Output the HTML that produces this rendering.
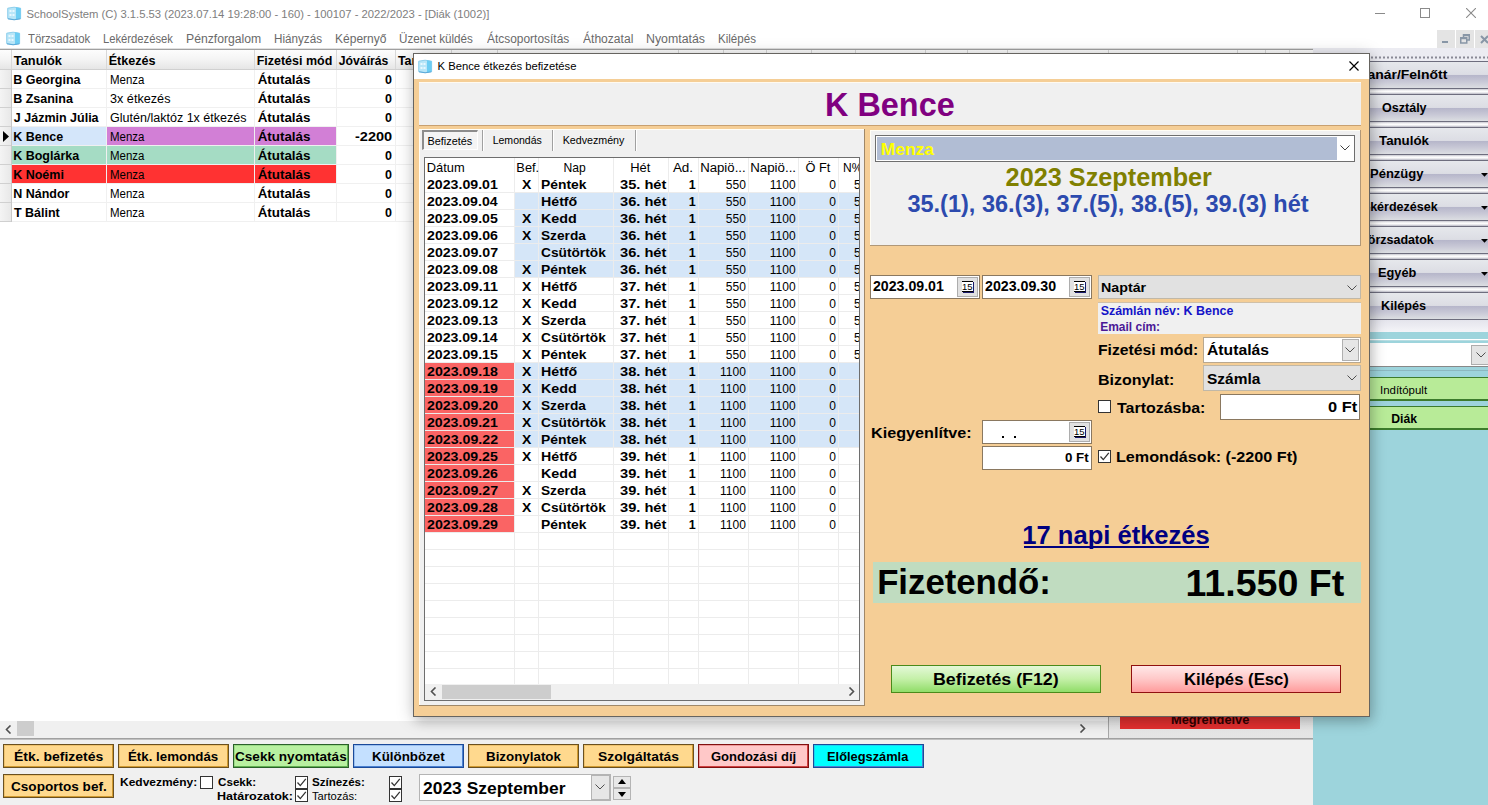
<!DOCTYPE html>
<html><head><meta charset="utf-8">
<style>
*{margin:0;padding:0;box-sizing:border-box}
html,body{width:1488px;height:805px;overflow:hidden;background:#f0f0f0;font-family:"Liberation Sans",sans-serif;color:#000;position:relative}
.a{position:absolute}
.t{position:absolute;white-space:nowrap;line-height:1}
svg{position:absolute}
</style></head><body>
<div class="a" style="left:0px;top:0px;width:1488px;height:49px;background:#fff"></div>
<svg style="left:7px;top:6px" width="15" height="15"><path d="M0.7 2.2 Q7 0.2 13.6 2.2 V12.6 Q7 14.6 0.7 12.6 Z" fill="#b8e6f8" stroke="#86cbea" stroke-width="0.9"/><path d="M9 1.2 Q11.5 1.5 13.6 2.2 V12.6 Q11.5 13.3 9 13.6 Z" fill="#6ccdf3"/><path d="M2.5 4h2v2h-2zM5.5 4h2v2h-2zM2.5 8h2v2h-2zM5.5 8h2v2h-2z" fill="#e8f8ff"/><path d="M1 12.8 Q7 14.8 13.4 12.8" fill="none" stroke="#5aa8d8" stroke-width="1"/></svg>
<div class="t" style="left:26.49px;top:9px;font-size:11.28px;color:#7e7e7e;">SchoolSystem (C) 3.1.5.53 (2023.07.14 19:28:00 - 160) - 100107 - 2022/2023 - [Diák (1002)]</div>
<div class="a" style="left:1375px;top:13px;width:10px;height:1px;background:#8a8a8a"></div>
<div class="a" style="left:1420px;top:8px;width:10px;height:10px;border:1px solid #8a8a8a"></div>
<svg style="left:1466px;top:8px" width="10" height="10"><path d="M0 0L10 10M10 0L0 10" stroke="#8a8a8a" stroke-width="1.1"/></svg>
<svg style="left:6px;top:31px" width="15" height="15"><path d="M0.7 2.2 Q7 0.2 13.6 2.2 V12.6 Q7 14.6 0.7 12.6 Z" fill="#b8e6f8" stroke="#86cbea" stroke-width="0.9"/><path d="M9 1.2 Q11.5 1.5 13.6 2.2 V12.6 Q11.5 13.3 9 13.6 Z" fill="#6ccdf3"/><path d="M2.5 4h2v2h-2zM5.5 4h2v2h-2zM2.5 8h2v2h-2zM5.5 8h2v2h-2z" fill="#e8f8ff"/><path d="M1 12.8 Q7 14.8 13.4 12.8" fill="none" stroke="#5aa8d8" stroke-width="1"/></svg>
<div class="t" style="left:27.77px;top:33px;font-size:12.00px;color:#6a6a6a;transform:scaleX(0.9420);transform-origin:0 0;">Törzsadatok</div>
<div class="t" style="left:103.10px;top:33px;font-size:12.00px;color:#6a6a6a;transform:scaleX(0.9357);transform-origin:0 0;">Lekérdezések</div>
<div class="t" style="left:186.02px;top:33px;font-size:12.00px;color:#6a6a6a;transform:scaleX(1.0166);transform-origin:0 0;">Pénzforgalom</div>
<div class="t" style="left:274.07px;top:33px;font-size:12.00px;color:#6a6a6a;transform:scaleX(0.9729);transform-origin:0 0;">Hiányzás</div>
<div class="t" style="left:335.04px;top:33px;font-size:12.00px;color:#6a6a6a;">Képernyő</div>
<div class="t" style="left:399.13px;top:33px;font-size:12.00px;color:#6a6a6a;transform:scaleX(0.9719);transform-origin:0 0;">Üzenet küldés</div>
<div class="t" style="left:487.00px;top:33px;font-size:12.00px;color:#6a6a6a;transform:scaleX(0.9944);transform-origin:0 0;">Átcsoportosítás</div>
<div class="t" style="left:583.00px;top:33px;font-size:12.00px;color:#6a6a6a;transform:scaleX(1.0061);transform-origin:0 0;">Áthozatal</div>
<div class="t" style="left:646.01px;top:33px;font-size:12.00px;color:#6a6a6a;transform:scaleX(1.0289);transform-origin:0 0;">Nyomtatás</div>
<div class="t" style="left:718.07px;top:33px;font-size:12.00px;color:#6a6a6a;transform:scaleX(0.9637);transform-origin:0 0;">Kilépés</div>
<div class="a" style="left:1437px;top:30px;width:18px;height:18px;background:#e4e4e4"></div>
<div class="a" style="left:1456px;top:30px;width:18px;height:18px;background:#e4e4e4"></div>
<div class="a" style="left:1475px;top:30px;width:13px;height:18px;background:#e4e4e4"></div>
<div class="a" style="left:1442px;top:41px;width:6px;height:2px;background:#8896a6"></div>
<svg style="left:1460px;top:34px" width="11" height="10"><path d="M3.5 3V0.75H9.25V6H6.5" fill="none" stroke="#8896a6" stroke-width="1.5"/><rect x="0.75" y="3.75" width="6" height="5.25" fill="none" stroke="#8896a6" stroke-width="1.5"/><rect x="0.75" y="3.75" width="6" height="1.5" fill="#8896a6"/><rect x="3.5" y="0.75" width="5.75" height="1.5" fill="#8896a6"/></svg>
<svg style="left:1480px;top:35px" width="9" height="9"><path d="M1 1L8 8M8 1L1 8" stroke="#8896a6" stroke-width="2"/></svg>
<div class="a" style="left:0px;top:48px;width:1313px;height:1px;background:#e0e0e0"></div>
<div class="a" style="left:0px;top:49px;width:1313px;height:1px;background:#a0a0a0"></div>
<div class="a" style="left:0px;top:50px;width:1313px;height:671px;background:#fff"></div>
<div class="a" style="left:0px;top:50px;width:1313px;height:19px;background:linear-gradient(#fdfdfd,#f4f4f4 50%,#e6e6e6)"></div>
<div class="a" style="left:0px;top:69px;width:1313px;height:1px;background:#d0d0d0"></div>
<div class="a" style="left:11px;top:50px;width:1px;height:19px;background:#d8d8d8"></div>
<div class="a" style="left:106px;top:50px;width:1px;height:19px;background:#d8d8d8"></div>
<div class="a" style="left:254px;top:50px;width:1px;height:19px;background:#d8d8d8"></div>
<div class="a" style="left:336px;top:50px;width:1px;height:19px;background:#d8d8d8"></div>
<div class="a" style="left:395px;top:50px;width:1px;height:19px;background:#d8d8d8"></div>
<div class="a" style="left:451px;top:50px;width:1px;height:19px;background:#d8d8d8"></div>
<div class="a" style="left:497px;top:50px;width:1px;height:19px;background:#d8d8d8"></div>
<div class="a" style="left:678px;top:50px;width:1px;height:19px;background:#d8d8d8"></div>
<div class="a" style="left:723px;top:50px;width:1px;height:19px;background:#d8d8d8"></div>
<div class="a" style="left:766px;top:50px;width:1px;height:19px;background:#d8d8d8"></div>
<div class="a" style="left:811px;top:50px;width:1px;height:19px;background:#d8d8d8"></div>
<div class="a" style="left:855px;top:50px;width:1px;height:19px;background:#d8d8d8"></div>
<div class="a" style="left:925px;top:50px;width:1px;height:19px;background:#d8d8d8"></div>
<div class="a" style="left:967px;top:50px;width:1px;height:19px;background:#d8d8d8"></div>
<div class="a" style="left:1007px;top:50px;width:1px;height:19px;background:#d8d8d8"></div>
<div class="a" style="left:1108px;top:50px;width:1px;height:19px;background:#d8d8d8"></div>
<div class="a" style="left:1237px;top:50px;width:1px;height:19px;background:#d8d8d8"></div>
<div class="a" style="left:1265px;top:50px;width:1px;height:19px;background:#d8d8d8"></div>
<div class="a" style="left:1289px;top:50px;width:1px;height:19px;background:#d8d8d8"></div>
<div class="a" style="left:0px;top:70px;width:11px;height:152px;background:linear-gradient(90deg,#f4f4f4,#e8e8e8)"></div>
<div class="a" style="left:11px;top:70px;width:1px;height:152px;background:#c8c8c8"></div>
<div class="a" style="left:0px;top:88px;width:11px;height:1px;background:#d0d0d0"></div>
<div class="a" style="left:12px;top:88px;width:1301px;height:1px;background:#f0f0f0"></div>
<div class="a" style="left:106px;top:70px;width:1px;height:18px;background:#f0f0f0"></div>
<div class="a" style="left:254px;top:70px;width:1px;height:18px;background:#f0f0f0"></div>
<div class="a" style="left:336px;top:70px;width:1px;height:18px;background:#f0f0f0"></div>
<div class="a" style="left:395px;top:70px;width:1px;height:18px;background:#f0f0f0"></div>
<div class="t" style="left:13.19px;top:74px;font-size:12.50px;font-weight:bold;color:#000;">B Georgina</div>
<div class="t" style="left:109.58px;top:74px;font-size:12.00px;color:#000;transform:scaleX(0.9561);transform-origin:0 0;">Menza</div>
<div class="t" style="left:257.66px;top:73px;font-size:13.40px;font-weight:bold;color:#000;">Átutalás</div>
<div class="t" style="left:385.06px;top:74px;font-size:12.50px;font-weight:bold;color:#000;">0</div>
<div class="a" style="left:0px;top:107px;width:11px;height:1px;background:#d0d0d0"></div>
<div class="a" style="left:12px;top:107px;width:1301px;height:1px;background:#f0f0f0"></div>
<div class="a" style="left:106px;top:89px;width:1px;height:18px;background:#f0f0f0"></div>
<div class="a" style="left:254px;top:89px;width:1px;height:18px;background:#f0f0f0"></div>
<div class="a" style="left:336px;top:89px;width:1px;height:18px;background:#f0f0f0"></div>
<div class="a" style="left:395px;top:89px;width:1px;height:18px;background:#f0f0f0"></div>
<div class="t" style="left:13.19px;top:93px;font-size:12.50px;font-weight:bold;color:#000;">B Zsanina</div>
<div class="t" style="left:109.99px;top:93px;font-size:12.00px;color:#000;transform:scaleX(1.0538);transform-origin:0 0;">3x étkezés</div>
<div class="t" style="left:257.66px;top:92px;font-size:13.40px;font-weight:bold;color:#000;">Átutalás</div>
<div class="t" style="left:385.06px;top:93px;font-size:12.50px;font-weight:bold;color:#000;">0</div>
<div class="a" style="left:0px;top:126px;width:11px;height:1px;background:#d0d0d0"></div>
<div class="a" style="left:12px;top:126px;width:1301px;height:1px;background:#f0f0f0"></div>
<div class="a" style="left:106px;top:108px;width:1px;height:18px;background:#f0f0f0"></div>
<div class="a" style="left:254px;top:108px;width:1px;height:18px;background:#f0f0f0"></div>
<div class="a" style="left:336px;top:108px;width:1px;height:18px;background:#f0f0f0"></div>
<div class="a" style="left:395px;top:108px;width:1px;height:18px;background:#f0f0f0"></div>
<div class="t" style="left:13.81px;top:112px;font-size:12.50px;font-weight:bold;color:#000;">J Jázmin Júlia</div>
<div class="t" style="left:109.87px;top:112px;font-size:12.00px;color:#000;transform:scaleX(1.0446);transform-origin:0 0;">Glutén/laktóz 1x étkezés</div>
<div class="t" style="left:257.66px;top:111px;font-size:13.40px;font-weight:bold;color:#000;">Átutalás</div>
<div class="t" style="left:385.06px;top:112px;font-size:12.50px;font-weight:bold;color:#000;">0</div>
<div class="a" style="left:12px;top:127px;width:94px;height:18px;background:#d4e6fa"></div>
<div class="a" style="left:107px;top:127px;width:147px;height:18px;background:#d27fd6"></div>
<div class="a" style="left:255px;top:127px;width:81px;height:18px;background:#d27fd6"></div>
<div class="a" style="left:0px;top:145px;width:11px;height:1px;background:#d0d0d0"></div>
<div class="a" style="left:12px;top:145px;width:1301px;height:1px;background:#f0f0f0"></div>
<div class="a" style="left:106px;top:127px;width:1px;height:18px;background:#f0f0f0"></div>
<div class="a" style="left:254px;top:127px;width:1px;height:18px;background:#f0f0f0"></div>
<div class="a" style="left:336px;top:127px;width:1px;height:18px;background:#f0f0f0"></div>
<div class="a" style="left:395px;top:127px;width:1px;height:18px;background:#f0f0f0"></div>
<div class="t" style="left:13.19px;top:131px;font-size:12.50px;font-weight:bold;color:#000;">K Bence</div>
<div class="t" style="left:109.58px;top:131px;font-size:12.00px;color:#000;transform:scaleX(0.9561);transform-origin:0 0;">Menza</div>
<div class="t" style="left:257.66px;top:130px;font-size:13.40px;font-weight:bold;color:#000;">Átutalás</div>
<div class="t" style="left:354.92px;top:131px;font-size:12.50px;font-weight:bold;color:#000;transform:scaleX(1.1636);transform-origin:0 0;">-2200</div>
<div class="a" style="left:12px;top:146px;width:94px;height:18px;background:#a5dcc4"></div>
<div class="a" style="left:107px;top:146px;width:147px;height:18px;background:#a5dcc4"></div>
<div class="a" style="left:255px;top:146px;width:81px;height:18px;background:#a5dcc4"></div>
<div class="a" style="left:0px;top:164px;width:11px;height:1px;background:#d0d0d0"></div>
<div class="a" style="left:12px;top:164px;width:1301px;height:1px;background:#f0f0f0"></div>
<div class="a" style="left:106px;top:146px;width:1px;height:18px;background:#f0f0f0"></div>
<div class="a" style="left:254px;top:146px;width:1px;height:18px;background:#f0f0f0"></div>
<div class="a" style="left:336px;top:146px;width:1px;height:18px;background:#f0f0f0"></div>
<div class="a" style="left:395px;top:146px;width:1px;height:18px;background:#f0f0f0"></div>
<div class="t" style="left:13.19px;top:150px;font-size:12.50px;font-weight:bold;color:#000;">K Boglárka</div>
<div class="t" style="left:109.58px;top:150px;font-size:12.00px;color:#000;transform:scaleX(0.9561);transform-origin:0 0;">Menza</div>
<div class="t" style="left:257.66px;top:149px;font-size:13.40px;font-weight:bold;color:#000;">Átutalás</div>
<div class="t" style="left:385.06px;top:150px;font-size:12.50px;font-weight:bold;color:#000;">0</div>
<div class="a" style="left:12px;top:165px;width:94px;height:18px;background:#ff3232"></div>
<div class="a" style="left:107px;top:165px;width:147px;height:18px;background:#ff3232"></div>
<div class="a" style="left:255px;top:165px;width:81px;height:18px;background:#ff3232"></div>
<div class="a" style="left:0px;top:183px;width:11px;height:1px;background:#d0d0d0"></div>
<div class="a" style="left:12px;top:183px;width:1301px;height:1px;background:#f0f0f0"></div>
<div class="a" style="left:106px;top:165px;width:1px;height:18px;background:#f0f0f0"></div>
<div class="a" style="left:254px;top:165px;width:1px;height:18px;background:#f0f0f0"></div>
<div class="a" style="left:336px;top:165px;width:1px;height:18px;background:#f0f0f0"></div>
<div class="a" style="left:395px;top:165px;width:1px;height:18px;background:#f0f0f0"></div>
<div class="t" style="left:13.19px;top:169px;font-size:12.50px;font-weight:bold;color:#000;">K Noémi</div>
<div class="t" style="left:109.58px;top:169px;font-size:12.00px;color:#000;transform:scaleX(0.9561);transform-origin:0 0;">Menza</div>
<div class="t" style="left:257.66px;top:168px;font-size:13.40px;font-weight:bold;color:#000;">Átutalás</div>
<div class="t" style="left:385.06px;top:169px;font-size:12.50px;font-weight:bold;color:#000;">0</div>
<div class="a" style="left:0px;top:202px;width:11px;height:1px;background:#d0d0d0"></div>
<div class="a" style="left:12px;top:202px;width:1301px;height:1px;background:#f0f0f0"></div>
<div class="a" style="left:106px;top:184px;width:1px;height:18px;background:#f0f0f0"></div>
<div class="a" style="left:254px;top:184px;width:1px;height:18px;background:#f0f0f0"></div>
<div class="a" style="left:336px;top:184px;width:1px;height:18px;background:#f0f0f0"></div>
<div class="a" style="left:395px;top:184px;width:1px;height:18px;background:#f0f0f0"></div>
<div class="t" style="left:13.19px;top:188px;font-size:12.50px;font-weight:bold;color:#000;">N Nándor</div>
<div class="t" style="left:109.58px;top:188px;font-size:12.00px;color:#000;transform:scaleX(0.9561);transform-origin:0 0;">Menza</div>
<div class="t" style="left:257.66px;top:187px;font-size:13.40px;font-weight:bold;color:#000;">Átutalás</div>
<div class="t" style="left:385.06px;top:188px;font-size:12.50px;font-weight:bold;color:#000;">0</div>
<div class="a" style="left:0px;top:221px;width:11px;height:1px;background:#d0d0d0"></div>
<div class="a" style="left:12px;top:221px;width:1301px;height:1px;background:#f0f0f0"></div>
<div class="a" style="left:106px;top:203px;width:1px;height:18px;background:#f0f0f0"></div>
<div class="a" style="left:254px;top:203px;width:1px;height:18px;background:#f0f0f0"></div>
<div class="a" style="left:336px;top:203px;width:1px;height:18px;background:#f0f0f0"></div>
<div class="a" style="left:395px;top:203px;width:1px;height:18px;background:#f0f0f0"></div>
<div class="t" style="left:13.88px;top:207px;font-size:12.50px;font-weight:bold;color:#000;">T Bálint</div>
<div class="t" style="left:109.58px;top:207px;font-size:12.00px;color:#000;transform:scaleX(0.9561);transform-origin:0 0;">Menza</div>
<div class="t" style="left:257.66px;top:206px;font-size:13.40px;font-weight:bold;color:#000;">Átutalás</div>
<div class="t" style="left:385.06px;top:207px;font-size:12.50px;font-weight:bold;color:#000;">0</div>
<svg style="left:2px;top:131px" width="8" height="11"><path d="M1 0L7 5.5L1 11Z" fill="#000"/></svg>
<div class="t" style="left:13.87px;top:55px;font-size:12.80px;font-weight:bold;color:#000;">Tanulók</div>
<div class="t" style="left:108.68px;top:55px;font-size:12.62px;font-weight:bold;color:#000;">Étkezés</div>
<div class="t" style="left:256.69px;top:55px;font-size:12.49px;font-weight:bold;color:#000;">Fizetési mód</div>
<div class="t" style="left:338.82px;top:55px;font-size:12.23px;font-weight:bold;color:#000;">Jóváírás</div>
<div class="t" style="left:397.88px;top:55px;font-size:12.50px;font-weight:bold;color:#000;">Tanuló</div>
<div class="a" style="left:0px;top:721px;width:1108px;height:17px;background:#f0f0f0"></div>
<div class="a" style="left:17px;top:721px;width:17px;height:15px;background:#cdcdcd"></div>
<svg style="left:5px;top:725px" width="7" height="9"><path d="M5.5 0.5L1.5 4.5L5.5 8.5" fill="none" stroke="#505050" stroke-width="1.6"/></svg>
<svg style="left:1079px;top:724px" width="7" height="9"><path d="M1.5 0.5L5.5 4.5L1.5 8.5" fill="none" stroke="#505050" stroke-width="1.6"/></svg>
<div class="a" style="left:1108px;top:700px;width:1px;height:38px;background:#a8a8a8"></div>
<div class="a" style="left:1109px;top:700px;width:204px;height:38px;background:linear-gradient(#f4f4f4,#e4e4e4)"></div>
<div class="a" style="left:1120px;top:700px;width:180px;height:29px;background:#e53030"></div>
<div class="t" style="left:1171.17px;top:714px;font-size:12.00px;font-weight:bold;color:#300000;transform:scaleX(1.0677);transform-origin:0 0;">Megrendelve</div>
<div class="a" style="left:0px;top:738px;width:1313px;height:1px;background:#a0a0a0"></div>
<div class="a" style="left:0px;top:739px;width:1313px;height:1px;background:#c0c0c0"></div>
<div class="a" style="left:0px;top:740px;width:1313px;height:65px;background:#f0f0f0"></div>
<div class="a" style="left:3px;top:744px;width:111px;height:24px;background:#ffd98e;border:1px solid #6a5020;box-shadow:inset -1px -1px 0 #d09a30,inset 1px 1px 0 #d09a3055"></div>
<div class="t" style="left:13.69px;top:750px;font-size:13.00px;font-weight:bold;color:#000;transform:scaleX(1.0746);transform-origin:0 0;">Étk. befizetés</div>
<div class="a" style="left:118px;top:744px;width:111px;height:24px;background:#ffd98e;border:1px solid #6a5020;box-shadow:inset -1px -1px 0 #d09a30,inset 1px 1px 0 #d09a3055"></div>
<div class="t" style="left:128.24px;top:750px;font-size:13.00px;font-weight:bold;color:#000;transform:scaleX(1.0233);transform-origin:0 0;">Étk. lemondás</div>
<div class="a" style="left:233px;top:744px;width:116px;height:24px;background:#b8f0a0;border:1px solid #2a602a;box-shadow:inset -1px -1px 0 #60b050,inset 1px 1px 0 #60b05055"></div>
<div class="t" style="left:235.16px;top:750px;font-size:13.00px;font-weight:bold;color:#000;transform:scaleX(1.0445);transform-origin:0 0;">Csekk nyomtatás</div>
<div class="a" style="left:353px;top:744px;width:111px;height:24px;background:#c4e0ff;border:1px solid #1a4a9a;box-shadow:inset -1px -1px 0 #4a80d0,inset 1px 1px 0 #4a80d055"></div>
<div class="t" style="left:371.78px;top:750px;font-size:13.00px;font-weight:bold;color:#000;transform:scaleX(1.0280);transform-origin:0 0;">Különbözet</div>
<div class="a" style="left:468px;top:744px;width:111px;height:24px;background:#ffd98e;border:1px solid #6a5020;box-shadow:inset -1px -1px 0 #d09a30,inset 1px 1px 0 #d09a3055"></div>
<div class="t" style="left:485.63px;top:750px;font-size:13.00px;font-weight:bold;color:#000;transform:scaleX(1.0266);transform-origin:0 0;">Bizonylatok</div>
<div class="a" style="left:583px;top:744px;width:111px;height:24px;background:#ffd98e;border:1px solid #6a5020;box-shadow:inset -1px -1px 0 #d09a30,inset 1px 1px 0 #d09a3055"></div>
<div class="t" style="left:598.08px;top:750px;font-size:13.00px;font-weight:bold;color:#000;transform:scaleX(1.0674);transform-origin:0 0;">Szolgáltatás</div>
<div class="a" style="left:698px;top:744px;width:111px;height:24px;background:#ffc8c8;border:1px solid #801010;box-shadow:inset -1px -1px 0 #d04040,inset 1px 1px 0 #d0404055"></div>
<div class="t" style="left:710.98px;top:750px;font-size:13.00px;font-weight:bold;color:#000;">Gondozási díj</div>
<div class="a" style="left:813px;top:744px;width:111px;height:24px;background:#00ffff;border:1px solid #1a4a9a;box-shadow:inset -1px -1px 0 #4a80d0,inset 1px 1px 0 #4a80d055"></div>
<div class="t" style="left:827.37px;top:750px;font-size:13.00px;font-weight:bold;color:#000;transform:scaleX(0.9873);transform-origin:0 0;">Előlegszámla</div>
<div class="a" style="left:3px;top:774px;width:111px;height:24px;background:#ffd98e;border:1px solid #6a5020;box-shadow:inset -1px -1px 0 #d09a30,inset 1px 1px 0 #d09a3055"></div>
<div class="t" style="left:10.81px;top:780px;font-size:13.00px;font-weight:bold;color:#000;transform:scaleX(1.0437);transform-origin:0 0;">Csoportos bef.</div>
<div class="t" style="left:119.62px;top:776px;font-size:11.70px;font-weight:bold;color:#000;transform:scaleX(1.0254);transform-origin:0 0;">Kedvezmény:</div>
<div class="a" style="left:200px;top:776px;width:13px;height:13px;background:#fff;border:1px solid #333"></div>
<div class="t" style="left:217.73px;top:776px;font-size:11.70px;font-weight:bold;color:#000;transform:scaleX(0.9962);transform-origin:0 0;">Csekk:</div>
<div class="t" style="left:217.38px;top:790px;font-size:11.70px;font-weight:bold;color:#000;transform:scaleX(1.0729);transform-origin:0 0;">Határozatok:</div>
<div class="t" style="left:312.35px;top:776px;font-size:11.70px;font-weight:bold;color:#000;transform:scaleX(0.9936);transform-origin:0 0;">Színezés:</div>
<div class="t" style="left:312.48px;top:790px;font-size:11.70px;color:#000;transform:scaleX(0.9533);transform-origin:0 0;">Tartozás:</div>
<div class="a" style="left:295px;top:776px;width:13px;height:13px;background:#fff;border:1px solid #333"></div>
<svg style="left:296px;top:777px" width="11" height="11"><path d="M1.5 5.5L4.3 8.6L9.8 1.8" fill="none" stroke="#333" stroke-width="1.3"/></svg>
<div class="a" style="left:295px;top:789px;width:13px;height:13px;background:#fff;border:1px solid #333"></div>
<svg style="left:296px;top:790px" width="11" height="11"><path d="M1.5 5.5L4.3 8.6L9.8 1.8" fill="none" stroke="#333" stroke-width="1.3"/></svg>
<div class="a" style="left:389px;top:776px;width:13px;height:13px;background:#fff;border:1px solid #333"></div>
<svg style="left:390px;top:777px" width="11" height="11"><path d="M1.5 5.5L4.3 8.6L9.8 1.8" fill="none" stroke="#333" stroke-width="1.3"/></svg>
<div class="a" style="left:389px;top:789px;width:13px;height:13px;background:#fff;border:1px solid #333"></div>
<svg style="left:390px;top:790px" width="11" height="11"><path d="M1.5 5.5L4.3 8.6L9.8 1.8" fill="none" stroke="#333" stroke-width="1.3"/></svg>
<div class="a" style="left:419px;top:774px;width:192px;height:27px;background:#fff;border:1px solid #b4b4b4"></div>
<div class="a" style="left:591px;top:775px;width:19px;height:25px;background:#e6e6e6;border:1px solid #b4b4b4"></div>
<svg style="left:595px;top:784px" width="10" height="6"><path d="M0.5 0.5L5 5L9.5 0.5" fill="none" stroke="#505050" stroke-width="1"/></svg>
<div class="t" style="left:423.39px;top:780px;font-size:17.00px;font-weight:bold;color:#000;transform:scaleX(1.0258);transform-origin:0 0;">2023 Szeptember</div>
<div class="a" style="left:613px;top:776px;width:18px;height:12px;background:#e8e8e8;border:1px solid #b4b4b4"></div>
<div class="a" style="left:613px;top:788px;width:18px;height:12px;background:#e8e8e8;border:1px solid #b4b4b4"></div>
<svg style="left:618px;top:779px" width="8" height="5"><path d="M0 5L4 0L8 5Z" fill="#000"/></svg>
<svg style="left:618px;top:792px" width="8" height="5"><path d="M0 0L4 5L8 0Z" fill="#000"/></svg>
<div class="a" style="left:1313px;top:48px;width:175px;height:284px;background:linear-gradient(#ececf2,#e6e6ee)"></div>
<svg style="left:1313px;top:56px" width="175" height="3"><line x1="2" y1="1.5" x2="175" y2="1.5" stroke="#8a8a96" stroke-width="2" stroke-dasharray="2 2"/></svg>
<div class="a" style="left:1313px;top:61px;width:175px;height:1px;background:#6e6e7e"></div>
<div class="a" style="left:1313px;top:62px;width:175px;height:26px;background:linear-gradient(#e6e8ec 0%,#dcdde4 48%,#b6b6ca 51%,#c8c8d6 75%,#dcdee2 100%)"></div>
<div class="a" style="left:1313px;top:88px;width:175px;height:1px;background:#6e6e7e"></div>
<div class="a" style="left:1313px;top:89px;width:175px;height:5px;background:linear-gradient(#c8c8d0,#fdfdfd 40%,#fafafa 60%,#b8b8c4)"></div>
<div class="t" style="left:1360.36px;top:69px;font-size:12.50px;font-weight:bold;color:#000;transform:scaleX(1.1163);transform-origin:0 0;">Tanár/Felnőtt</div>
<div class="a" style="left:1313px;top:94px;width:175px;height:1px;background:#6e6e7e"></div>
<div class="a" style="left:1313px;top:95px;width:175px;height:26px;background:linear-gradient(#e6e8ec 0%,#dcdde4 48%,#b6b6ca 51%,#c8c8d6 75%,#dcdee2 100%)"></div>
<div class="a" style="left:1313px;top:121px;width:175px;height:1px;background:#6e6e7e"></div>
<div class="a" style="left:1313px;top:122px;width:175px;height:5px;background:linear-gradient(#c8c8d0,#fdfdfd 40%,#fafafa 60%,#b8b8c4)"></div>
<div class="t" style="left:1381.50px;top:102px;font-size:12.50px;font-weight:bold;color:#000;transform:scaleX(1.0028);transform-origin:0 0;">Osztály</div>
<div class="a" style="left:1313px;top:127px;width:175px;height:1px;background:#6e6e7e"></div>
<div class="a" style="left:1313px;top:128px;width:175px;height:26px;background:linear-gradient(#e6e8ec 0%,#dcdde4 48%,#b6b6ca 51%,#c8c8d6 75%,#dcdee2 100%)"></div>
<div class="a" style="left:1313px;top:154px;width:175px;height:1px;background:#6e6e7e"></div>
<div class="a" style="left:1313px;top:155px;width:175px;height:5px;background:linear-gradient(#c8c8d0,#fdfdfd 40%,#fafafa 60%,#b8b8c4)"></div>
<div class="t" style="left:1378.97px;top:135px;font-size:12.50px;font-weight:bold;color:#000;transform:scaleX(1.0624);transform-origin:0 0;">Tanulók</div>
<div class="a" style="left:1313px;top:160px;width:175px;height:1px;background:#6e6e7e"></div>
<div class="a" style="left:1313px;top:161px;width:175px;height:26px;background:linear-gradient(#e6e8ec 0%,#dcdde4 48%,#b6b6ca 51%,#c8c8d6 75%,#dcdee2 100%)"></div>
<div class="a" style="left:1313px;top:187px;width:175px;height:1px;background:#6e6e7e"></div>
<div class="a" style="left:1313px;top:188px;width:175px;height:5px;background:linear-gradient(#c8c8d0,#fdfdfd 40%,#fafafa 60%,#b8b8c4)"></div>
<div class="t" style="left:1369.91px;top:168px;font-size:12.50px;font-weight:bold;color:#000;transform:scaleX(1.0396);transform-origin:0 0;">Pénzügy</div>
<svg style="left:1481px;top:173px" width="7" height="4"><path d="M0 0L7 0L3.5 3.8Z" fill="#000"/></svg>
<div class="a" style="left:1313px;top:193px;width:175px;height:1px;background:#6e6e7e"></div>
<div class="a" style="left:1313px;top:194px;width:175px;height:26px;background:linear-gradient(#e6e8ec 0%,#dcdde4 48%,#b6b6ca 51%,#c8c8d6 75%,#dcdee2 100%)"></div>
<div class="a" style="left:1313px;top:220px;width:175px;height:1px;background:#6e6e7e"></div>
<div class="a" style="left:1313px;top:221px;width:175px;height:5px;background:linear-gradient(#c8c8d0,#fdfdfd 40%,#fafafa 60%,#b8b8c4)"></div>
<div class="t" style="left:1355.59px;top:201px;font-size:12.50px;font-weight:bold;color:#000;">Lekérdezések</div>
<svg style="left:1481px;top:206px" width="7" height="4"><path d="M0 0L7 0L3.5 3.8Z" fill="#000"/></svg>
<div class="a" style="left:1313px;top:226px;width:175px;height:1px;background:#6e6e7e"></div>
<div class="a" style="left:1313px;top:227px;width:175px;height:26px;background:linear-gradient(#e6e8ec 0%,#dcdde4 48%,#b6b6ca 51%,#c8c8d6 75%,#dcdee2 100%)"></div>
<div class="a" style="left:1313px;top:253px;width:175px;height:1px;background:#6e6e7e"></div>
<div class="a" style="left:1313px;top:254px;width:175px;height:5px;background:linear-gradient(#c8c8d0,#fdfdfd 40%,#fafafa 60%,#b8b8c4)"></div>
<div class="t" style="left:1360.12px;top:234px;font-size:12.50px;font-weight:bold;color:#000;">Törzsadatok</div>
<svg style="left:1481px;top:239px" width="7" height="4"><path d="M0 0L7 0L3.5 3.8Z" fill="#000"/></svg>
<div class="a" style="left:1313px;top:259px;width:175px;height:1px;background:#6e6e7e"></div>
<div class="a" style="left:1313px;top:260px;width:175px;height:26px;background:linear-gradient(#e6e8ec 0%,#dcdde4 48%,#b6b6ca 51%,#c8c8d6 75%,#dcdee2 100%)"></div>
<div class="a" style="left:1313px;top:286px;width:175px;height:1px;background:#6e6e7e"></div>
<div class="a" style="left:1313px;top:287px;width:175px;height:5px;background:linear-gradient(#c8c8d0,#fdfdfd 40%,#fafafa 60%,#b8b8c4)"></div>
<div class="t" style="left:1377.67px;top:267px;font-size:12.50px;font-weight:bold;color:#000;transform:scaleX(1.0225);transform-origin:0 0;">Egyéb</div>
<svg style="left:1481px;top:272px" width="7" height="4"><path d="M0 0L7 0L3.5 3.8Z" fill="#000"/></svg>
<div class="a" style="left:1313px;top:292px;width:175px;height:1px;background:#6e6e7e"></div>
<div class="a" style="left:1313px;top:293px;width:175px;height:26px;background:linear-gradient(#e6e8ec 0%,#dcdde4 48%,#b6b6ca 51%,#c8c8d6 75%,#dcdee2 100%)"></div>
<div class="a" style="left:1313px;top:319px;width:175px;height:1px;background:#6e6e7e"></div>
<div class="a" style="left:1313px;top:320px;width:175px;height:5px;background:linear-gradient(#c8c8d0,#fdfdfd 40%,#fafafa 60%,#b8b8c4)"></div>
<div class="t" style="left:1381.27px;top:300px;font-size:12.50px;font-weight:bold;color:#000;transform:scaleX(1.0157);transform-origin:0 0;">Kilépés</div>
<div class="a" style="left:1313px;top:320px;width:175px;height:12px;background:linear-gradient(#e4e4ec,#f4f4f8)"></div>
<div class="a" style="left:1313px;top:332px;width:175px;height:473px;background:#9dd4dc"></div>
<div class="a" style="left:1313px;top:339px;width:175px;height:1px;background:#fff"></div>
<div class="a" style="left:1313px;top:340px;width:175px;height:1px;background:#b8dde2"></div>
<div class="a" style="left:1313px;top:343px;width:175px;height:24px;background:linear-gradient(90deg,#e8e8e8,#fff 20%);border-bottom:1px solid #888"></div>
<div class="a" style="left:1471px;top:345px;width:20px;height:20px;background:#e4e4e4;border:1px solid #adadad"></div>
<svg style="left:1476px;top:352px" width="10" height="6"><path d="M0.5 0.5L5 5L9.5 0.5" fill="none" stroke="#505050" stroke-width="1"/></svg>
<div class="a" style="left:1313px;top:370px;width:175px;height:1px;background:#8cb8c0"></div>
<div class="a" style="left:1313px;top:377px;width:175px;height:24px;background:linear-gradient(90deg,#a0d890,#b8eb98 8%);border-top:1px solid #3c7c2c;border-bottom:2px solid #3c7c2c"></div>
<div class="t" style="left:1379.97px;top:385px;font-size:11.46px;color:#000;">Indítópult</div>
<div class="a" style="left:1313px;top:406px;width:175px;height:24px;background:linear-gradient(90deg,#a0d890,#b8eb98 8%);border-top:1px solid #3c7c2c;border-bottom:2px solid #3c7c2c"></div>
<div class="t" style="left:1391.21px;top:413px;font-size:12.22px;font-weight:bold;color:#000;">Diák</div>
<div class="a" style="left:413px;top:53px;width:957px;height:664px;box-shadow:0 2px 16px rgba(0,0,0,0.22),3px 5px 10px rgba(0,0,0,0.12)"></div>
<div class="a" style="left:413px;top:53px;width:957px;height:664px;background:#f5ce96;border:1px solid #666460"></div>
<div class="a" style="left:414px;top:54px;width:955px;height:25px;background:#fff"></div>
<svg style="left:418px;top:59px" width="15" height="15"><path d="M0.7 2.2 Q7 0.2 13.6 2.2 V12.6 Q7 14.6 0.7 12.6 Z" fill="#b8e6f8" stroke="#86cbea" stroke-width="0.9"/><path d="M9 1.2 Q11.5 1.5 13.6 2.2 V12.6 Q11.5 13.3 9 13.6 Z" fill="#6ccdf3"/><path d="M2.5 4h2v2h-2zM5.5 4h2v2h-2zM2.5 8h2v2h-2zM5.5 8h2v2h-2z" fill="#e8f8ff"/><path d="M1 12.8 Q7 14.8 13.4 12.8" fill="none" stroke="#5aa8d8" stroke-width="1"/></svg>
<div class="t" style="left:437.60px;top:61px;font-size:11.25px;color:#000;">K Bence étkezés befizetése</div>
<svg style="left:1349px;top:61px" width="10" height="10"><path d="M0.5 0.5L9.5 9.5M9.5 0.5L0.5 9.5" stroke="#000" stroke-width="1.2"/></svg>
<div class="a" style="left:419px;top:82px;width:942px;height:44px;background:#f0f0f0;border-bottom:1px solid #c8a070"></div>
<div class="a" style="left:419px;top:82px;width:942px;height:1px;background:#fffaf0"></div>
<div class="t" style="left:825.10px;top:89px;font-size:32.38px;font-weight:bold;color:#800080;">K Bence</div>
<div class="a" style="left:419px;top:129px;width:446px;height:577px;background:#f0f0f0;border-right:1px solid #a08868;border-bottom:1px solid #a08868"></div>
<div class="a" style="left:419px;top:129px;width:445px;height:1px;background:#fffdf5"></div>
<div class="a" style="left:419px;top:129px;width:1px;height:576px;background:#fffdf5"></div>
<div class="a" style="left:422px;top:130px;width:56px;height:20px;background:#f4f4f4;border-top:2px solid #8c8c8c;border-left:2px solid #8c8c8c;border-bottom:1px solid #fff;border-right:1px solid #fff"></div>
<div class="a" style="left:482px;top:130px;width:1px;height:21px;background:#a0a0a0"></div>
<div class="a" style="left:483px;top:130px;width:1px;height:21px;background:#fff"></div>
<div class="a" style="left:552px;top:130px;width:1px;height:21px;background:#a0a0a0"></div>
<div class="a" style="left:553px;top:130px;width:1px;height:21px;background:#fff"></div>
<div class="a" style="left:635px;top:130px;width:1px;height:21px;background:#a0a0a0"></div>
<div class="a" style="left:636px;top:130px;width:1px;height:21px;background:#fff"></div>
<div class="t" style="left:427.53px;top:136px;font-size:10.88px;color:#000;">Befizetés</div>
<div class="t" style="left:492.66px;top:135px;font-size:10.54px;color:#000;">Lemondás</div>
<div class="t" style="left:562.64px;top:135px;font-size:10.70px;color:#000;">Kedvezmény</div>
<div class="a" style="left:424px;top:157px;width:436px;height:544px;background:#fff;border:1px solid #6e6e6e"></div>
<div class="a" style="left:515px;top:193px;width:344px;height:16px;background:#d5e6f8"></div>
<div class="a" style="left:515px;top:210px;width:344px;height:16px;background:#d5e6f8"></div>
<div class="a" style="left:515px;top:227px;width:344px;height:16px;background:#d5e6f8"></div>
<div class="a" style="left:515px;top:244px;width:344px;height:16px;background:#d5e6f8"></div>
<div class="a" style="left:515px;top:261px;width:344px;height:16px;background:#d5e6f8"></div>
<div class="a" style="left:515px;top:363px;width:344px;height:16px;background:#d5e6f8"></div>
<div class="a" style="left:425px;top:363px;width:89px;height:16px;background:#fa6464"></div>
<div class="a" style="left:515px;top:380px;width:344px;height:16px;background:#d5e6f8"></div>
<div class="a" style="left:425px;top:380px;width:89px;height:16px;background:#fa6464"></div>
<div class="a" style="left:515px;top:397px;width:344px;height:16px;background:#d5e6f8"></div>
<div class="a" style="left:425px;top:397px;width:89px;height:16px;background:#fa6464"></div>
<div class="a" style="left:515px;top:414px;width:344px;height:16px;background:#d5e6f8"></div>
<div class="a" style="left:425px;top:414px;width:89px;height:16px;background:#fa6464"></div>
<div class="a" style="left:515px;top:431px;width:344px;height:16px;background:#d5e6f8"></div>
<div class="a" style="left:425px;top:431px;width:89px;height:16px;background:#fa6464"></div>
<div class="a" style="left:425px;top:448px;width:89px;height:16px;background:#fa6464"></div>
<div class="a" style="left:425px;top:465px;width:89px;height:16px;background:#fa6464"></div>
<div class="a" style="left:425px;top:482px;width:89px;height:16px;background:#fa6464"></div>
<div class="a" style="left:425px;top:499px;width:89px;height:16px;background:#fa6464"></div>
<div class="a" style="left:425px;top:516px;width:89px;height:16px;background:#fa6464"></div>
<div class="a" style="left:425px;top:192px;width:434px;height:1px;background:#ececec"></div>
<div class="a" style="left:425px;top:209px;width:434px;height:1px;background:#ececec"></div>
<div class="a" style="left:425px;top:226px;width:434px;height:1px;background:#ececec"></div>
<div class="a" style="left:425px;top:243px;width:434px;height:1px;background:#ececec"></div>
<div class="a" style="left:425px;top:260px;width:434px;height:1px;background:#ececec"></div>
<div class="a" style="left:425px;top:277px;width:434px;height:1px;background:#ececec"></div>
<div class="a" style="left:425px;top:294px;width:434px;height:1px;background:#ececec"></div>
<div class="a" style="left:425px;top:311px;width:434px;height:1px;background:#ececec"></div>
<div class="a" style="left:425px;top:328px;width:434px;height:1px;background:#ececec"></div>
<div class="a" style="left:425px;top:345px;width:434px;height:1px;background:#ececec"></div>
<div class="a" style="left:425px;top:362px;width:434px;height:1px;background:#ececec"></div>
<div class="a" style="left:425px;top:379px;width:434px;height:1px;background:#ececec"></div>
<div class="a" style="left:425px;top:396px;width:434px;height:1px;background:#ececec"></div>
<div class="a" style="left:425px;top:413px;width:434px;height:1px;background:#ececec"></div>
<div class="a" style="left:425px;top:430px;width:434px;height:1px;background:#ececec"></div>
<div class="a" style="left:425px;top:447px;width:434px;height:1px;background:#ececec"></div>
<div class="a" style="left:425px;top:464px;width:434px;height:1px;background:#ececec"></div>
<div class="a" style="left:425px;top:481px;width:434px;height:1px;background:#ececec"></div>
<div class="a" style="left:425px;top:498px;width:434px;height:1px;background:#ececec"></div>
<div class="a" style="left:425px;top:515px;width:434px;height:1px;background:#ececec"></div>
<div class="a" style="left:425px;top:532px;width:434px;height:1px;background:#ececec"></div>
<div class="a" style="left:425px;top:549px;width:434px;height:1px;background:#ececec"></div>
<div class="a" style="left:425px;top:566px;width:434px;height:1px;background:#ececec"></div>
<div class="a" style="left:425px;top:583px;width:434px;height:1px;background:#ececec"></div>
<div class="a" style="left:425px;top:600px;width:434px;height:1px;background:#ececec"></div>
<div class="a" style="left:425px;top:617px;width:434px;height:1px;background:#ececec"></div>
<div class="a" style="left:425px;top:634px;width:434px;height:1px;background:#ececec"></div>
<div class="a" style="left:425px;top:651px;width:434px;height:1px;background:#ececec"></div>
<div class="a" style="left:425px;top:668px;width:434px;height:1px;background:#ececec"></div>
<div class="a" style="left:514px;top:158px;width:1px;height:526px;background:#ececec"></div>
<div class="a" style="left:538px;top:158px;width:1px;height:526px;background:#ececec"></div>
<div class="a" style="left:613px;top:158px;width:1px;height:526px;background:#ececec"></div>
<div class="a" style="left:668px;top:158px;width:1px;height:526px;background:#ececec"></div>
<div class="a" style="left:698px;top:158px;width:1px;height:526px;background:#ececec"></div>
<div class="a" style="left:748px;top:158px;width:1px;height:526px;background:#ececec"></div>
<div class="a" style="left:798px;top:158px;width:1px;height:526px;background:#ececec"></div>
<div class="a" style="left:838px;top:158px;width:1px;height:526px;background:#ececec"></div>
<div class="t" style="left:426.77px;top:162px;font-size:12.86px;color:#000;">Dátum</div>
<div class="t" style="left:516.37px;top:162px;font-size:12.83px;color:#000;">Bef.</div>
<div class="t" style="left:563.53px;top:162px;font-size:12.13px;color:#000;">Nap</div>
<div class="t" style="left:630.27px;top:162px;font-size:12.93px;color:#000;">Hét</div>
<div class="t" style="left:672.90px;top:161px;font-size:13.48px;color:#000;">Ad.</div>
<div class="t" style="left:700.14px;top:161px;font-size:13.22px;color:#000;">Napiö...</div>
<div class="t" style="left:750.13px;top:161px;font-size:13.34px;color:#000;">Napiö...</div>
<div class="t" style="left:805.42px;top:162px;font-size:12.80px;color:#000;">Ö Ft</div>
<div class="t" style="left:843.04px;top:162px;font-size:12.00px;color:#000;clip-path:inset(0 0 0 0);">N%</div>
<div class="t" style="left:427.30px;top:179px;font-size:12.50px;font-weight:bold;color:#000;transform:scaleX(1.1325);transform-origin:0 0;">2023.09.01</div>
<div class="t" style="left:521.86px;top:179px;font-size:12.50px;font-weight:bold;color:#000;transform:scaleX(1.1163);transform-origin:0 0;">X</div>
<div class="t" style="left:540.70px;top:179px;font-size:12.50px;font-weight:bold;color:#000;transform:scaleX(1.1097);transform-origin:0 0;">Péntek</div>
<div class="t" style="left:620.13px;top:179px;font-size:12.50px;font-weight:bold;color:#000;transform:scaleX(1.1706);transform-origin:0 0;">35. hét</div>
<div class="t" style="left:688.67px;top:179px;font-size:12.50px;font-weight:bold;color:#000;">1</div>
<div class="t" style="left:725.84px;top:179px;font-size:12.00px;color:#000;">550</div>
<div class="t" style="left:769.82px;top:179px;font-size:12.00px;color:#000;">1100</div>
<div class="t" style="left:829.16px;top:179px;font-size:12.00px;color:#000;">0</div>
<div class="t" style="left:854.12px;top:179px;font-size:12.00px;color:#000;">5</div>
<div class="t" style="left:427.31px;top:196px;font-size:12.50px;font-weight:bold;color:#000;transform:scaleX(1.1279);transform-origin:0 0;">2023.09.04</div>
<div class="t" style="left:540.68px;top:196px;font-size:12.50px;font-weight:bold;color:#000;transform:scaleX(1.1346);transform-origin:0 0;">Hétfő</div>
<div class="t" style="left:620.13px;top:196px;font-size:12.50px;font-weight:bold;color:#000;transform:scaleX(1.1706);transform-origin:0 0;">36. hét</div>
<div class="t" style="left:688.67px;top:196px;font-size:12.50px;font-weight:bold;color:#000;">1</div>
<div class="t" style="left:725.84px;top:196px;font-size:12.00px;color:#000;">550</div>
<div class="t" style="left:769.82px;top:196px;font-size:12.00px;color:#000;">1100</div>
<div class="t" style="left:829.16px;top:196px;font-size:12.00px;color:#000;">0</div>
<div class="t" style="left:854.12px;top:196px;font-size:12.00px;color:#000;">5</div>
<div class="t" style="left:427.30px;top:213px;font-size:12.50px;font-weight:bold;color:#000;transform:scaleX(1.1325);transform-origin:0 0;">2023.09.05</div>
<div class="t" style="left:521.86px;top:213px;font-size:12.50px;font-weight:bold;color:#000;transform:scaleX(1.1163);transform-origin:0 0;">X</div>
<div class="t" style="left:540.67px;top:213px;font-size:12.50px;font-weight:bold;color:#000;transform:scaleX(1.1476);transform-origin:0 0;">Kedd</div>
<div class="t" style="left:620.13px;top:213px;font-size:12.50px;font-weight:bold;color:#000;transform:scaleX(1.1706);transform-origin:0 0;">36. hét</div>
<div class="t" style="left:688.67px;top:213px;font-size:12.50px;font-weight:bold;color:#000;">1</div>
<div class="t" style="left:725.84px;top:213px;font-size:12.00px;color:#000;">550</div>
<div class="t" style="left:769.82px;top:213px;font-size:12.00px;color:#000;">1100</div>
<div class="t" style="left:829.16px;top:213px;font-size:12.00px;color:#000;">0</div>
<div class="t" style="left:854.12px;top:213px;font-size:12.00px;color:#000;">5</div>
<div class="t" style="left:427.30px;top:230px;font-size:12.50px;font-weight:bold;color:#000;transform:scaleX(1.1348);transform-origin:0 0;">2023.09.06</div>
<div class="t" style="left:521.86px;top:230px;font-size:12.50px;font-weight:bold;color:#000;transform:scaleX(1.1163);transform-origin:0 0;">X</div>
<div class="t" style="left:541.19px;top:230px;font-size:12.50px;font-weight:bold;color:#000;transform:scaleX(1.0944);transform-origin:0 0;">Szerda</div>
<div class="t" style="left:620.13px;top:230px;font-size:12.50px;font-weight:bold;color:#000;transform:scaleX(1.1706);transform-origin:0 0;">36. hét</div>
<div class="t" style="left:688.67px;top:230px;font-size:12.50px;font-weight:bold;color:#000;">1</div>
<div class="t" style="left:725.84px;top:230px;font-size:12.00px;color:#000;">550</div>
<div class="t" style="left:769.82px;top:230px;font-size:12.00px;color:#000;">1100</div>
<div class="t" style="left:829.16px;top:230px;font-size:12.00px;color:#000;">0</div>
<div class="t" style="left:854.12px;top:230px;font-size:12.00px;color:#000;">5</div>
<div class="t" style="left:427.30px;top:247px;font-size:12.50px;font-weight:bold;color:#000;transform:scaleX(1.1359);transform-origin:0 0;">2023.09.07</div>
<div class="t" style="left:541.05px;top:247px;font-size:12.50px;font-weight:bold;color:#000;transform:scaleX(1.0977);transform-origin:0 0;">Csütörtök</div>
<div class="t" style="left:620.13px;top:247px;font-size:12.50px;font-weight:bold;color:#000;transform:scaleX(1.1706);transform-origin:0 0;">36. hét</div>
<div class="t" style="left:688.67px;top:247px;font-size:12.50px;font-weight:bold;color:#000;">1</div>
<div class="t" style="left:725.84px;top:247px;font-size:12.00px;color:#000;">550</div>
<div class="t" style="left:769.82px;top:247px;font-size:12.00px;color:#000;">1100</div>
<div class="t" style="left:829.16px;top:247px;font-size:12.00px;color:#000;">0</div>
<div class="t" style="left:854.12px;top:247px;font-size:12.00px;color:#000;">5</div>
<div class="t" style="left:427.30px;top:264px;font-size:12.50px;font-weight:bold;color:#000;transform:scaleX(1.1336);transform-origin:0 0;">2023.09.08</div>
<div class="t" style="left:521.86px;top:264px;font-size:12.50px;font-weight:bold;color:#000;transform:scaleX(1.1163);transform-origin:0 0;">X</div>
<div class="t" style="left:540.70px;top:264px;font-size:12.50px;font-weight:bold;color:#000;transform:scaleX(1.1097);transform-origin:0 0;">Péntek</div>
<div class="t" style="left:620.13px;top:264px;font-size:12.50px;font-weight:bold;color:#000;transform:scaleX(1.1706);transform-origin:0 0;">36. hét</div>
<div class="t" style="left:688.67px;top:264px;font-size:12.50px;font-weight:bold;color:#000;">1</div>
<div class="t" style="left:725.84px;top:264px;font-size:12.00px;color:#000;">550</div>
<div class="t" style="left:769.82px;top:264px;font-size:12.00px;color:#000;">1100</div>
<div class="t" style="left:829.16px;top:264px;font-size:12.00px;color:#000;">0</div>
<div class="t" style="left:854.12px;top:264px;font-size:12.00px;color:#000;">5</div>
<div class="t" style="left:427.30px;top:281px;font-size:12.50px;font-weight:bold;color:#000;transform:scaleX(1.1452);transform-origin:0 0;">2023.09.11</div>
<div class="t" style="left:521.86px;top:281px;font-size:12.50px;font-weight:bold;color:#000;transform:scaleX(1.1163);transform-origin:0 0;">X</div>
<div class="t" style="left:540.68px;top:281px;font-size:12.50px;font-weight:bold;color:#000;transform:scaleX(1.1346);transform-origin:0 0;">Hétfő</div>
<div class="t" style="left:620.13px;top:281px;font-size:12.50px;font-weight:bold;color:#000;transform:scaleX(1.1706);transform-origin:0 0;">37. hét</div>
<div class="t" style="left:688.67px;top:281px;font-size:12.50px;font-weight:bold;color:#000;">1</div>
<div class="t" style="left:725.84px;top:281px;font-size:12.00px;color:#000;">550</div>
<div class="t" style="left:769.82px;top:281px;font-size:12.00px;color:#000;">1100</div>
<div class="t" style="left:829.16px;top:281px;font-size:12.00px;color:#000;">0</div>
<div class="t" style="left:854.12px;top:281px;font-size:12.00px;color:#000;">5</div>
<div class="t" style="left:427.30px;top:298px;font-size:12.50px;font-weight:bold;color:#000;transform:scaleX(1.1359);transform-origin:0 0;">2023.09.12</div>
<div class="t" style="left:521.86px;top:298px;font-size:12.50px;font-weight:bold;color:#000;transform:scaleX(1.1163);transform-origin:0 0;">X</div>
<div class="t" style="left:540.67px;top:298px;font-size:12.50px;font-weight:bold;color:#000;transform:scaleX(1.1476);transform-origin:0 0;">Kedd</div>
<div class="t" style="left:620.13px;top:298px;font-size:12.50px;font-weight:bold;color:#000;transform:scaleX(1.1706);transform-origin:0 0;">37. hét</div>
<div class="t" style="left:688.67px;top:298px;font-size:12.50px;font-weight:bold;color:#000;">1</div>
<div class="t" style="left:725.84px;top:298px;font-size:12.00px;color:#000;">550</div>
<div class="t" style="left:769.82px;top:298px;font-size:12.00px;color:#000;">1100</div>
<div class="t" style="left:829.16px;top:298px;font-size:12.00px;color:#000;">0</div>
<div class="t" style="left:854.12px;top:298px;font-size:12.00px;color:#000;">5</div>
<div class="t" style="left:427.30px;top:315px;font-size:12.50px;font-weight:bold;color:#000;transform:scaleX(1.1348);transform-origin:0 0;">2023.09.13</div>
<div class="t" style="left:521.86px;top:315px;font-size:12.50px;font-weight:bold;color:#000;transform:scaleX(1.1163);transform-origin:0 0;">X</div>
<div class="t" style="left:541.19px;top:315px;font-size:12.50px;font-weight:bold;color:#000;transform:scaleX(1.0944);transform-origin:0 0;">Szerda</div>
<div class="t" style="left:620.13px;top:315px;font-size:12.50px;font-weight:bold;color:#000;transform:scaleX(1.1706);transform-origin:0 0;">37. hét</div>
<div class="t" style="left:688.67px;top:315px;font-size:12.50px;font-weight:bold;color:#000;">1</div>
<div class="t" style="left:725.84px;top:315px;font-size:12.00px;color:#000;">550</div>
<div class="t" style="left:769.82px;top:315px;font-size:12.00px;color:#000;">1100</div>
<div class="t" style="left:829.16px;top:315px;font-size:12.00px;color:#000;">0</div>
<div class="t" style="left:854.12px;top:315px;font-size:12.00px;color:#000;">5</div>
<div class="t" style="left:427.31px;top:332px;font-size:12.50px;font-weight:bold;color:#000;transform:scaleX(1.1279);transform-origin:0 0;">2023.09.14</div>
<div class="t" style="left:521.86px;top:332px;font-size:12.50px;font-weight:bold;color:#000;transform:scaleX(1.1163);transform-origin:0 0;">X</div>
<div class="t" style="left:541.05px;top:332px;font-size:12.50px;font-weight:bold;color:#000;transform:scaleX(1.0977);transform-origin:0 0;">Csütörtök</div>
<div class="t" style="left:620.13px;top:332px;font-size:12.50px;font-weight:bold;color:#000;transform:scaleX(1.1706);transform-origin:0 0;">37. hét</div>
<div class="t" style="left:688.67px;top:332px;font-size:12.50px;font-weight:bold;color:#000;">1</div>
<div class="t" style="left:725.84px;top:332px;font-size:12.00px;color:#000;">550</div>
<div class="t" style="left:769.82px;top:332px;font-size:12.00px;color:#000;">1100</div>
<div class="t" style="left:829.16px;top:332px;font-size:12.00px;color:#000;">0</div>
<div class="t" style="left:854.12px;top:332px;font-size:12.00px;color:#000;">5</div>
<div class="t" style="left:427.30px;top:349px;font-size:12.50px;font-weight:bold;color:#000;transform:scaleX(1.1325);transform-origin:0 0;">2023.09.15</div>
<div class="t" style="left:521.86px;top:349px;font-size:12.50px;font-weight:bold;color:#000;transform:scaleX(1.1163);transform-origin:0 0;">X</div>
<div class="t" style="left:540.70px;top:349px;font-size:12.50px;font-weight:bold;color:#000;transform:scaleX(1.1097);transform-origin:0 0;">Péntek</div>
<div class="t" style="left:620.13px;top:349px;font-size:12.50px;font-weight:bold;color:#000;transform:scaleX(1.1706);transform-origin:0 0;">37. hét</div>
<div class="t" style="left:688.67px;top:349px;font-size:12.50px;font-weight:bold;color:#000;">1</div>
<div class="t" style="left:725.84px;top:349px;font-size:12.00px;color:#000;">550</div>
<div class="t" style="left:769.82px;top:349px;font-size:12.00px;color:#000;">1100</div>
<div class="t" style="left:829.16px;top:349px;font-size:12.00px;color:#000;">0</div>
<div class="t" style="left:854.12px;top:349px;font-size:12.00px;color:#000;">5</div>
<div class="t" style="left:427.30px;top:366px;font-size:12.50px;font-weight:bold;color:#000;transform:scaleX(1.1336);transform-origin:0 0;">2023.09.18</div>
<div class="t" style="left:521.86px;top:366px;font-size:12.50px;font-weight:bold;color:#000;transform:scaleX(1.1163);transform-origin:0 0;">X</div>
<div class="t" style="left:540.68px;top:366px;font-size:12.50px;font-weight:bold;color:#000;transform:scaleX(1.1346);transform-origin:0 0;">Hétfő</div>
<div class="t" style="left:620.13px;top:366px;font-size:12.50px;font-weight:bold;color:#000;transform:scaleX(1.1706);transform-origin:0 0;">38. hét</div>
<div class="t" style="left:688.67px;top:366px;font-size:12.50px;font-weight:bold;color:#000;">1</div>
<div class="t" style="left:720.02px;top:366px;font-size:12.00px;color:#000;">1100</div>
<div class="t" style="left:769.82px;top:366px;font-size:12.00px;color:#000;">1100</div>
<div class="t" style="left:829.16px;top:366px;font-size:12.00px;color:#000;">0</div>
<div class="t" style="left:427.30px;top:383px;font-size:12.50px;font-weight:bold;color:#000;transform:scaleX(1.1348);transform-origin:0 0;">2023.09.19</div>
<div class="t" style="left:521.86px;top:383px;font-size:12.50px;font-weight:bold;color:#000;transform:scaleX(1.1163);transform-origin:0 0;">X</div>
<div class="t" style="left:540.67px;top:383px;font-size:12.50px;font-weight:bold;color:#000;transform:scaleX(1.1476);transform-origin:0 0;">Kedd</div>
<div class="t" style="left:620.13px;top:383px;font-size:12.50px;font-weight:bold;color:#000;transform:scaleX(1.1706);transform-origin:0 0;">38. hét</div>
<div class="t" style="left:688.67px;top:383px;font-size:12.50px;font-weight:bold;color:#000;">1</div>
<div class="t" style="left:720.02px;top:383px;font-size:12.00px;color:#000;">1100</div>
<div class="t" style="left:769.82px;top:383px;font-size:12.00px;color:#000;">1100</div>
<div class="t" style="left:829.16px;top:383px;font-size:12.00px;color:#000;">0</div>
<div class="t" style="left:427.30px;top:400px;font-size:12.50px;font-weight:bold;color:#000;transform:scaleX(1.1359);transform-origin:0 0;">2023.09.20</div>
<div class="t" style="left:521.86px;top:400px;font-size:12.50px;font-weight:bold;color:#000;transform:scaleX(1.1163);transform-origin:0 0;">X</div>
<div class="t" style="left:541.19px;top:400px;font-size:12.50px;font-weight:bold;color:#000;transform:scaleX(1.0944);transform-origin:0 0;">Szerda</div>
<div class="t" style="left:620.13px;top:400px;font-size:12.50px;font-weight:bold;color:#000;transform:scaleX(1.1706);transform-origin:0 0;">38. hét</div>
<div class="t" style="left:688.67px;top:400px;font-size:12.50px;font-weight:bold;color:#000;">1</div>
<div class="t" style="left:720.02px;top:400px;font-size:12.00px;color:#000;">1100</div>
<div class="t" style="left:769.82px;top:400px;font-size:12.00px;color:#000;">1100</div>
<div class="t" style="left:829.16px;top:400px;font-size:12.00px;color:#000;">0</div>
<div class="t" style="left:427.30px;top:417px;font-size:12.50px;font-weight:bold;color:#000;transform:scaleX(1.1325);transform-origin:0 0;">2023.09.21</div>
<div class="t" style="left:521.86px;top:417px;font-size:12.50px;font-weight:bold;color:#000;transform:scaleX(1.1163);transform-origin:0 0;">X</div>
<div class="t" style="left:541.05px;top:417px;font-size:12.50px;font-weight:bold;color:#000;transform:scaleX(1.0977);transform-origin:0 0;">Csütörtök</div>
<div class="t" style="left:620.13px;top:417px;font-size:12.50px;font-weight:bold;color:#000;transform:scaleX(1.1706);transform-origin:0 0;">38. hét</div>
<div class="t" style="left:688.67px;top:417px;font-size:12.50px;font-weight:bold;color:#000;">1</div>
<div class="t" style="left:720.02px;top:417px;font-size:12.00px;color:#000;">1100</div>
<div class="t" style="left:769.82px;top:417px;font-size:12.00px;color:#000;">1100</div>
<div class="t" style="left:829.16px;top:417px;font-size:12.00px;color:#000;">0</div>
<div class="t" style="left:427.30px;top:434px;font-size:12.50px;font-weight:bold;color:#000;transform:scaleX(1.1359);transform-origin:0 0;">2023.09.22</div>
<div class="t" style="left:521.86px;top:434px;font-size:12.50px;font-weight:bold;color:#000;transform:scaleX(1.1163);transform-origin:0 0;">X</div>
<div class="t" style="left:540.70px;top:434px;font-size:12.50px;font-weight:bold;color:#000;transform:scaleX(1.1097);transform-origin:0 0;">Péntek</div>
<div class="t" style="left:620.13px;top:434px;font-size:12.50px;font-weight:bold;color:#000;transform:scaleX(1.1706);transform-origin:0 0;">38. hét</div>
<div class="t" style="left:688.67px;top:434px;font-size:12.50px;font-weight:bold;color:#000;">1</div>
<div class="t" style="left:720.02px;top:434px;font-size:12.00px;color:#000;">1100</div>
<div class="t" style="left:769.82px;top:434px;font-size:12.00px;color:#000;">1100</div>
<div class="t" style="left:829.16px;top:434px;font-size:12.00px;color:#000;">0</div>
<div class="t" style="left:427.30px;top:451px;font-size:12.50px;font-weight:bold;color:#000;transform:scaleX(1.1325);transform-origin:0 0;">2023.09.25</div>
<div class="t" style="left:521.86px;top:451px;font-size:12.50px;font-weight:bold;color:#000;transform:scaleX(1.1163);transform-origin:0 0;">X</div>
<div class="t" style="left:540.68px;top:451px;font-size:12.50px;font-weight:bold;color:#000;transform:scaleX(1.1346);transform-origin:0 0;">Hétfő</div>
<div class="t" style="left:620.13px;top:451px;font-size:12.50px;font-weight:bold;color:#000;transform:scaleX(1.1706);transform-origin:0 0;">39. hét</div>
<div class="t" style="left:688.67px;top:451px;font-size:12.50px;font-weight:bold;color:#000;">1</div>
<div class="t" style="left:720.02px;top:451px;font-size:12.00px;color:#000;">1100</div>
<div class="t" style="left:769.82px;top:451px;font-size:12.00px;color:#000;">1100</div>
<div class="t" style="left:829.16px;top:451px;font-size:12.00px;color:#000;">0</div>
<div class="t" style="left:427.30px;top:468px;font-size:12.50px;font-weight:bold;color:#000;transform:scaleX(1.1348);transform-origin:0 0;">2023.09.26</div>
<div class="t" style="left:540.67px;top:468px;font-size:12.50px;font-weight:bold;color:#000;transform:scaleX(1.1476);transform-origin:0 0;">Kedd</div>
<div class="t" style="left:620.13px;top:468px;font-size:12.50px;font-weight:bold;color:#000;transform:scaleX(1.1706);transform-origin:0 0;">39. hét</div>
<div class="t" style="left:688.67px;top:468px;font-size:12.50px;font-weight:bold;color:#000;">1</div>
<div class="t" style="left:720.02px;top:468px;font-size:12.00px;color:#000;">1100</div>
<div class="t" style="left:769.82px;top:468px;font-size:12.00px;color:#000;">1100</div>
<div class="t" style="left:829.16px;top:468px;font-size:12.00px;color:#000;">0</div>
<div class="t" style="left:427.30px;top:485px;font-size:12.50px;font-weight:bold;color:#000;transform:scaleX(1.1359);transform-origin:0 0;">2023.09.27</div>
<div class="t" style="left:521.86px;top:485px;font-size:12.50px;font-weight:bold;color:#000;transform:scaleX(1.1163);transform-origin:0 0;">X</div>
<div class="t" style="left:541.19px;top:485px;font-size:12.50px;font-weight:bold;color:#000;transform:scaleX(1.0944);transform-origin:0 0;">Szerda</div>
<div class="t" style="left:620.13px;top:485px;font-size:12.50px;font-weight:bold;color:#000;transform:scaleX(1.1706);transform-origin:0 0;">39. hét</div>
<div class="t" style="left:688.67px;top:485px;font-size:12.50px;font-weight:bold;color:#000;">1</div>
<div class="t" style="left:720.02px;top:485px;font-size:12.00px;color:#000;">1100</div>
<div class="t" style="left:769.82px;top:485px;font-size:12.00px;color:#000;">1100</div>
<div class="t" style="left:829.16px;top:485px;font-size:12.00px;color:#000;">0</div>
<div class="t" style="left:427.30px;top:502px;font-size:12.50px;font-weight:bold;color:#000;transform:scaleX(1.1336);transform-origin:0 0;">2023.09.28</div>
<div class="t" style="left:521.86px;top:502px;font-size:12.50px;font-weight:bold;color:#000;transform:scaleX(1.1163);transform-origin:0 0;">X</div>
<div class="t" style="left:541.05px;top:502px;font-size:12.50px;font-weight:bold;color:#000;transform:scaleX(1.0977);transform-origin:0 0;">Csütörtök</div>
<div class="t" style="left:620.13px;top:502px;font-size:12.50px;font-weight:bold;color:#000;transform:scaleX(1.1706);transform-origin:0 0;">39. hét</div>
<div class="t" style="left:688.67px;top:502px;font-size:12.50px;font-weight:bold;color:#000;">1</div>
<div class="t" style="left:720.02px;top:502px;font-size:12.00px;color:#000;">1100</div>
<div class="t" style="left:769.82px;top:502px;font-size:12.00px;color:#000;">1100</div>
<div class="t" style="left:829.16px;top:502px;font-size:12.00px;color:#000;">0</div>
<div class="t" style="left:427.30px;top:519px;font-size:12.50px;font-weight:bold;color:#000;transform:scaleX(1.1348);transform-origin:0 0;">2023.09.29</div>
<div class="t" style="left:540.70px;top:519px;font-size:12.50px;font-weight:bold;color:#000;transform:scaleX(1.1097);transform-origin:0 0;">Péntek</div>
<div class="t" style="left:620.13px;top:519px;font-size:12.50px;font-weight:bold;color:#000;transform:scaleX(1.1706);transform-origin:0 0;">39. hét</div>
<div class="t" style="left:688.67px;top:519px;font-size:12.50px;font-weight:bold;color:#000;">1</div>
<div class="t" style="left:720.02px;top:519px;font-size:12.00px;color:#000;">1100</div>
<div class="t" style="left:769.82px;top:519px;font-size:12.00px;color:#000;">1100</div>
<div class="t" style="left:829.16px;top:519px;font-size:12.00px;color:#000;">0</div>
<div class="a" style="left:860px;top:157px;width:4px;height:545px;background:#f0f0f0"></div>
<div class="a" style="left:859px;top:157px;width:1px;height:544px;background:#6e6e6e"></div>
<div class="a" style="left:425px;top:684px;width:434px;height:16px;background:#f0f0f0"></div>
<div class="a" style="left:442px;top:685px;width:109px;height:14px;background:#cdcdcd"></div>
<svg style="left:430px;top:687px" width="7" height="9"><path d="M5.5 0.5L1.5 4.5L5.5 8.5" fill="none" stroke="#505050" stroke-width="1.6"/></svg>
<svg style="left:848px;top:687px" width="7" height="9"><path d="M1.5 0.5L5.5 4.5L1.5 8.5" fill="none" stroke="#505050" stroke-width="1.6"/></svg>
<div class="a" style="left:870px;top:130px;width:491px;height:116px;background:#f0f0f0;border-right:1px solid #b09878;border-bottom:1px solid #b09878"></div>
<div class="a" style="left:870px;top:130px;width:490px;height:1px;background:#fffdf5"></div>
<div class="a" style="left:870px;top:130px;width:1px;height:115px;background:#fffdf5"></div>
<div class="a" style="left:875px;top:135px;width:480px;height:27px;background:#fff;border:1px solid #6e6e6e"></div>
<div class="a" style="left:877px;top:137px;width:460px;height:23px;background:#b1bdd4"></div>
<svg style="left:1340px;top:145px" width="10" height="6"><path d="M0.5 0.5L5 5L9.5 0.5" fill="none" stroke="#404040" stroke-width="1"/></svg>
<div class="t" style="left:880.87px;top:141px;font-size:17.33px;font-weight:bold;color:#ffff00;">Menza</div>
<div class="t" style="left:1005.62px;top:165px;font-size:25.25px;font-weight:bold;color:#808000;">2023 Szeptember</div>
<div class="t" style="left:907.41px;top:193px;font-size:23.53px;font-weight:bold;color:#2c4aae;">35.(1), 36.(3), 37.(5), 38.(5), 39.(3) hét</div>
<div class="a" style="left:870px;top:275px;width:110px;height:24px;background:#fff;border:1px solid #8a7860"></div>
<div class="t" style="left:873.20px;top:279px;font-size:14.00px;font-weight:bold;color:#000;transform:scaleX(1.0111);transform-origin:0 0;">2023.09.01</div>
<div class="a" style="left:957px;top:277px;width:21px;height:20px;background:#e1e1e1;border:1px solid #adadad"></div>
<svg style="left:962px;top:281px" width="13" height="13"><rect x="10" y="1" width="2" height="11" fill="#1a1a6a"/><rect x="1" y="10" width="11" height="2" fill="#1a1a6a"/><rect x="0" y="0" width="11" height="11" fill="#fff"/><rect x="0" y="0" width="11" height="1" fill="#000"/><rect x="0" y="10" width="11" height="1" fill="#000"/><text x="5.3" y="9" font-family="Liberation Sans" font-size="9.5" text-anchor="middle" fill="#000">15</text></svg>
<div class="a" style="left:982px;top:275px;width:110px;height:24px;background:#fff;border:1px solid #8a7860"></div>
<div class="t" style="left:985.20px;top:279px;font-size:14.00px;font-weight:bold;color:#000;transform:scaleX(1.0142);transform-origin:0 0;">2023.09.30</div>
<div class="a" style="left:1069px;top:277px;width:21px;height:20px;background:#e1e1e1;border:1px solid #adadad"></div>
<svg style="left:1074px;top:281px" width="13" height="13"><rect x="10" y="1" width="2" height="11" fill="#1a1a6a"/><rect x="1" y="10" width="11" height="2" fill="#1a1a6a"/><rect x="0" y="0" width="11" height="11" fill="#fff"/><rect x="0" y="0" width="11" height="1" fill="#000"/><rect x="0" y="10" width="11" height="1" fill="#000"/><text x="5.3" y="9" font-family="Liberation Sans" font-size="9.5" text-anchor="middle" fill="#000">15</text></svg>
<div class="a" style="left:1098px;top:275px;width:263px;height:24px;background:#e1e1e1;border:1px solid #c0b8a8"></div>
<div class="t" style="left:1101.07px;top:281px;font-size:13.00px;font-weight:bold;color:#000;transform:scaleX(1.0953);transform-origin:0 0;">Naptár</div>
<svg style="left:1347px;top:285px" width="10" height="6"><path d="M0.5 0.5L5 5L9.5 0.5" fill="none" stroke="#505050" stroke-width="1"/></svg>
<div class="a" style="left:1098px;top:302px;width:263px;height:32px;background:#f0f0f0;border-top:1px solid #d0c0a8"></div>
<div class="t" style="left:1100.63px;top:305px;font-size:12.45px;font-weight:bold;color:#1414c8;">Számlán név: K Bence</div>
<div class="t" style="left:1100.22px;top:321px;font-size:11.98px;font-weight:bold;color:#4b1896;">Email cím:</div>
<div class="t" style="left:1097.68px;top:342px;font-size:15.00px;font-weight:bold;color:#000;transform:scaleX(1.0452);transform-origin:0 0;">Fizetési mód:</div>
<div class="a" style="left:1203px;top:337px;width:158px;height:26px;background:#fff;border:1px solid #b8a890"></div>
<div class="a" style="left:1342px;top:339px;width:17px;height:22px;background:#e6e6e6;border:1px solid #b0b0b0"></div>
<svg style="left:1345px;top:347px" width="10" height="6"><path d="M0.5 0.5L5 5L9.5 0.5" fill="none" stroke="#505050" stroke-width="1"/></svg>
<div class="t" style="left:1207.11px;top:342px;font-size:15.00px;font-weight:bold;color:#000;transform:scaleX(1.0481);transform-origin:0 0;">Átutalás</div>
<div class="t" style="left:1097.66px;top:372px;font-size:15.00px;font-weight:bold;color:#000;transform:scaleX(1.0646);transform-origin:0 0;">Bizonylat:</div>
<div class="a" style="left:1203px;top:365px;width:158px;height:26px;background:#e1e1e1;border:1px solid #c0b8a8"></div>
<svg style="left:1347px;top:375px" width="10" height="6"><path d="M0.5 0.5L5 5L9.5 0.5" fill="none" stroke="#505050" stroke-width="1"/></svg>
<div class="t" style="left:1207.04px;top:371px;font-size:15.00px;font-weight:bold;color:#000;transform:scaleX(1.0316);transform-origin:0 0;">Számla</div>
<div class="a" style="left:1098px;top:400px;width:13px;height:13px;background:#fff;border:1px solid #333"></div>
<div class="t" style="left:1116.84px;top:400px;font-size:15.00px;font-weight:bold;color:#000;transform:scaleX(1.0632);transform-origin:0 0;">Tartozásba:</div>
<div class="a" style="left:1220px;top:394px;width:140px;height:26px;background:#fff;border:1px solid #8a7860"></div>
<div class="t" style="left:1327.74px;top:399px;font-size:15.00px;font-weight:bold;color:#000;transform:scaleX(1.0937);transform-origin:0 0;">0 Ft</div>
<div class="t" style="left:870.85px;top:425px;font-size:15.00px;font-weight:bold;color:#000;transform:scaleX(1.0781);transform-origin:0 0;">Kiegyenlítve:</div>
<div class="a" style="left:982px;top:420px;width:110px;height:24px;background:#fff;border:1px solid #8a7860"></div>
<div class="a" style="left:1002px;top:436px;width:2px;height:2px;background:#000"></div>
<div class="a" style="left:1014px;top:436px;width:2px;height:2px;background:#000"></div>
<div class="a" style="left:1069px;top:422px;width:21px;height:20px;background:#e1e1e1;border:1px solid #adadad"></div>
<svg style="left:1074px;top:426px" width="13" height="13"><rect x="10" y="1" width="2" height="11" fill="#1a1a6a"/><rect x="1" y="10" width="11" height="2" fill="#1a1a6a"/><rect x="0" y="0" width="11" height="11" fill="#fff"/><rect x="0" y="0" width="11" height="1" fill="#000"/><rect x="0" y="10" width="11" height="1" fill="#000"/><text x="5.3" y="9" font-family="Liberation Sans" font-size="9.5" text-anchor="middle" fill="#000">15</text></svg>
<div class="a" style="left:982px;top:446px;width:110px;height:24px;background:#fff;border:1px solid #8a7860"></div>
<div class="t" style="left:1065.17px;top:451px;font-size:13.00px;font-weight:bold;color:#000;transform:scaleX(1.0256);transform-origin:0 0;">0 Ft</div>
<div class="a" style="left:1098px;top:450px;width:13px;height:13px;background:#fff;border:1px solid #333"></div>
<svg style="left:1099px;top:451px" width="11" height="11"><path d="M1.5 5.5L4.3 8.6L9.8 1.8" fill="none" stroke="#333" stroke-width="1.3"/></svg>
<div class="t" style="left:1115.55px;top:449px;font-size:15.00px;font-weight:bold;color:#000;transform:scaleX(1.0777);transform-origin:0 0;">Lemondások: (-2200 Ft)</div>
<div class="t" style="left:1022.37px;top:523px;font-size:25.54px;font-weight:bold;color:#000080;">17 napi étkezés</div>
<div class="a" style="left:1024px;top:546px;width:185px;height:2px;background:#000080"></div>
<div class="a" style="left:873px;top:562px;width:488px;height:41px;background:#c0dcc0"></div>
<div class="t" style="left:877.14px;top:565px;font-size:34.75px;font-weight:bold;color:#000;">Fizetendő:</div>
<div class="t" style="left:1185.54px;top:565px;font-size:37.59px;font-weight:bold;color:#000;">11.550 Ft</div>
<div class="a" style="left:891px;top:665px;width:210px;height:28px;background:linear-gradient(#e4f8d8,#c4f0a8 50%,#90dc68);border:1px solid #4a8a1a"></div>
<div class="t" style="left:932.84px;top:672px;font-size:16.00px;font-weight:bold;color:#000;transform:scaleX(1.1132);transform-origin:0 0;">Befizetés (F12)</div>
<div class="a" style="left:1131px;top:665px;width:210px;height:28px;background:linear-gradient(#ffe8e8,#ffc8c8 50%,#ff9c9c);border:1px solid #901010"></div>
<div class="t" style="left:1183.51px;top:672px;font-size:16.00px;font-weight:bold;color:#000;transform:scaleX(1.0442);transform-origin:0 0;">Kilépés (Esc)</div></body></html>
